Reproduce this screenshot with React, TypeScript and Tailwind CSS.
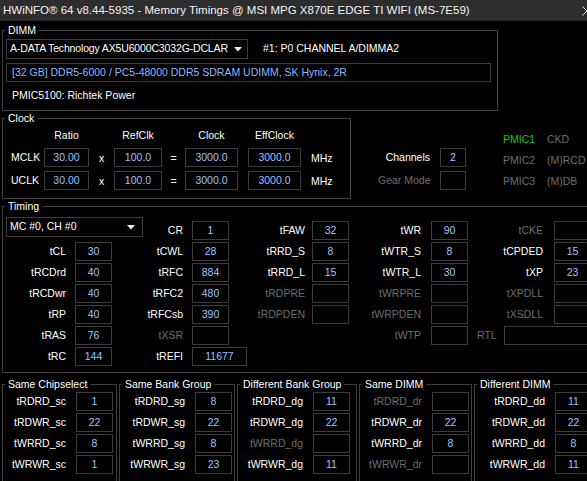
import React from "react";

type Cell = { l: string; v?: string; off?: boolean; wide?: boolean; rtl?: boolean };

function Box({ v, className = "w-[37px]" }: { v?: string; className?: string }) {
  return (
    <div
      className={`flex h-[19px] shrink-0 items-center justify-center border border-[#3c3c3c] text-[#9cc4ff] ${className}`}
    >
      {v}
    </div>
  );
}

function Arrow() {
  return (
    <svg width="8" height="5" viewBox="0 0 8 5" className="shrink-0">
      <path d="M0 0h8L4 4.5z" fill="#f0f0f0" />
    </svg>
  );
}

function Group({
  title,
  className = "",
  children,
}: {
  title: string;
  className?: string;
  children: React.ReactNode;
}) {
  return (
    <fieldset className={`min-w-0 shrink-0 border border-[#3f3f3f] ${className}`}>
      <legend className="ml-[2px] px-[3px] leading-[14px]">{title}</legend>
      {children}
    </fieldset>
  );
}

function Label({ l, off, className = "" }: { l: string; off?: boolean; className?: string }) {
  return <span className={`shrink-0 ${off ? "text-[#6d6d6d]" : ""} ${className}`}>{l}</span>;
}

function TCol({
  w,
  lw,
  gap,
  rows,
  className = "",
  children,
}: {
  w: string;
  lw: string;
  gap: string;
  rows: Cell[];
  className?: string;
  children?: React.ReactNode;
}) {
  return (
    <div className={`flex shrink-0 flex-col ${w} ${className}`}>
      {children}
      <div className="flex flex-col gap-[2px]">
        {rows.map((r) =>
          r.rtl ? (
            <div key={r.l} className="flex h-[19px] items-center pl-[9px]">
              <Label l={r.l} off={r.off} />
              <Box v={r.v} className="ml-[7px] w-[100px]" />
            </div>
          ) : (
            <div key={r.l} className="flex h-[19px] items-center">
              <Label l={r.l} off={r.off} className={`${lw} text-right`} />
              <Box v={r.v} className={`${gap} ${r.wide ? "w-[55px]" : "w-[37px]"}`} />
            </div>
          )
        )}
      </div>
    </div>
  );
}

function BGroup({
  title,
  rows,
  className,
}: {
  title: string;
  rows: Cell[];
  className: string;
}) {
  return (
    <Group title={title} className={className}>
      <div className="flex flex-col gap-[2px] pb-[10px] pt-[1px]">
        {rows.map((r) => (
          <div key={r.l} className="flex h-[19px] items-center justify-end">
            <Label l={r.l} off={r.off} />
            <Box v={r.v} className="ml-[10px] w-[37px]" />
          </div>
        ))}
      </div>
    </Group>
  );
}

const col1: Cell[] = [
  { l: "tCL", v: "30" },
  { l: "tRCDrd", v: "40" },
  { l: "tRCDwr", v: "40" },
  { l: "tRP", v: "40" },
  { l: "tRAS", v: "76" },
  { l: "tRC", v: "144" },
];
const col2: Cell[] = [
  { l: "CR", v: "1" },
  { l: "tCWL", v: "28" },
  { l: "tRFC", v: "884" },
  { l: "tRFC2", v: "480" },
  { l: "tRFCsb", v: "390" },
  { l: "tXSR", off: true },
  { l: "tREFI", v: "11677", wide: true },
];
const col3: Cell[] = [
  { l: "tFAW", v: "32" },
  { l: "tRRD_S", v: "8" },
  { l: "tRRD_L", v: "15" },
  { l: "tRDPRE", off: true },
  { l: "tRDPDEN", off: true },
];
const col4: Cell[] = [
  { l: "tWR", v: "90" },
  { l: "tWTR_S", v: "8" },
  { l: "tWTR_L", v: "30" },
  { l: "tWRPRE", off: true },
  { l: "tWRPDEN", off: true },
  { l: "tWTP", off: true },
];
const col5: Cell[] = [
  { l: "tCKE", off: true },
  { l: "tCPDED", v: "15" },
  { l: "tXP", v: "23" },
  { l: "tXPDLL", off: true },
  { l: "tXSDLL", off: true },
  { l: "RTL", off: true, rtl: true },
];

const groups: { title: string; className: string; rows: Cell[] }[] = [
  {
    title: "Same Chipselect",
    className: "w-[115px] pr-[3px]",
    rows: [
      { l: "tRDRD_sc", v: "1" },
      { l: "tRDWR_sc", v: "22" },
      { l: "tWRRD_sc", v: "8" },
      { l: "tWRWR_sc", v: "1" },
    ],
  },
  {
    title: "Same Bank Group",
    className: "ml-[2px] w-[116px] pr-[2px]",
    rows: [
      { l: "tRDRD_sg", v: "8" },
      { l: "tRDWR_sg", v: "22" },
      { l: "tWRRD_sg", v: "8" },
      { l: "tWRWR_sg", v: "23" },
    ],
  },
  {
    title: "Different Bank Group",
    className: "ml-[2px] w-[120px] pr-[6px]",
    rows: [
      { l: "tRDRD_dg", v: "11" },
      { l: "tRDWR_dg", v: "22" },
      { l: "tWRRD_dg", off: true },
      { l: "tWRWR_dg", v: "11" },
    ],
  },
  {
    title: "Same DIMM",
    className: "ml-[2px] w-[113px] pr-[2px]",
    rows: [
      { l: "tRDRD_dr", off: true },
      { l: "tRDWR_dr", v: "22" },
      { l: "tWRRD_dr", v: "8" },
      { l: "tWRWR_dr", off: true },
    ],
  },
  {
    title: "Different DIMM",
    className: "ml-[2px] w-[130px] pr-[11px]",
    rows: [
      { l: "tRDRD_dd", v: "11" },
      { l: "tRDWR_dd", v: "22" },
      { l: "tWRRD_dd", v: "8" },
      { l: "tWRWR_dd", v: "11" },
    ],
  },
];

export default function App() {
  return (
    <div className="h-[481px] w-[587px] overflow-hidden whitespace-nowrap bg-black font-['Liberation_Sans',Arial,sans-serif] text-[10.5px] text-white">
      <div className="w-[620px]">
        {/* title bar */}
        <div className="flex h-[21px] items-center justify-between bg-[#2d2d2d] pl-[3px] pr-[28px] text-[11.5px] text-[#f2f2f2]">
          <span>HWiNFO® 64 v8.44-5935 - Memory Timings @ MSI MPG X870E EDGE TI WIFI (MS-7E59)</span>
          <svg width="10" height="10" viewBox="0 0 10 10">
            <path d="M0.5 0.5l9 9M9.5 0.5l-9 9" stroke="#e8e8e8" strokeWidth="1" />
          </svg>
        </div>

        <div className="pl-[2px]">
          {/* DIMM */}
          <Group title="DIMM" className="mt-[2px] w-[496px] pb-[8px]">
            <div className="mt-[2px] flex items-center">
              <div className="ml-[3px] flex h-[20px] w-[242px] items-center justify-between border border-[#3c3c3c] pl-[3px] pr-[5px]">
                <span className="tracking-[-0.15px]">A-DATA Technology AX5U6000C3032G-DCLAR</span>
                <Arrow />
              </div>
              <span className="ml-[15px]">#1: P0 CHANNEL A/DIMMA2</span>
            </div>
            <div className="ml-[3px] mt-[4px] flex h-[19px] w-[485px] items-center border border-[#3c3c3c] pl-[5px] text-[#8db8ff]">
              [32 GB] DDR5-6000 / PC5-48000 DDR5 SDRAM UDIMM, SK Hynix, 2R
            </div>
            <div className="mt-[6px] h-[14px] pl-[9px] leading-[14px]">PMIC5100: Richtek Power</div>
          </Group>

          {/* Clock row */}
          <div className="flex items-start">
            <Group title="Clock" className="w-[349px] pb-[8px]">
              <div className="grid grid-cols-[41px_45px_25px_48px_23px_53px_10px_53px_auto] grid-rows-[16px_19px_19px] gap-y-[4px] pt-[3px]">
                <span />
                <span className="text-center leading-[14px]">Ratio</span>
                <span />
                <span className="text-center leading-[14px]">RefClk</span>
                <span />
                <span className="text-center leading-[14px]">Clock</span>
                <span />
                <span className="text-center leading-[14px]">EffClock</span>
                <span />

                {[
                  ["MCLK", "30.00", "100.0", "3000.0", "3000.0"],
                  ["UCLK", "30.00", "100.0", "3000.0", "3000.0"],
                ].map((r) => (
                  <React.Fragment key={r[0]}>
                    <span className="flex items-center pl-[8px]">{r[0]}</span>
                    <Box v={r[1]} className="w-[45px]" />
                    <span className="flex items-center justify-center pt-[3px]">x</span>
                    <Box v={r[2]} className="w-[48px]" />
                    <span className="flex items-center justify-center pt-[2px]">=</span>
                    <Box v={r[3]} className="w-[53px]" />
                    <span />
                    <Box v={r[4]} className="w-[53px]" />
                    <span className="flex items-center pl-[10px] pt-[2px]">MHz</span>
                  </React.Fragment>
                ))}
              </div>
            </Group>

            <div className="ml-[27px] flex flex-col gap-[4px] pt-[37px]">
              <div className="flex h-[19px] items-center">
                <span className="w-[52px] text-right">Channels</span>
                <Box v="2" className="ml-[10px] w-[26px]" />
              </div>
              <div className="flex h-[19px] items-center">
                <span className="w-[52px] text-right text-[#6d6d6d]">Gear Mode</span>
                <Box className="ml-[10px] w-[26px]" />
              </div>
            </div>

            <div className="ml-[37px] flex flex-col gap-[7px] pt-[21px] leading-[14px] text-[#6d6d6d]">
              <div className="flex">
                <span className="w-[44px] text-[#16c916]">PMIC1</span>
                <span>CKD</span>
              </div>
              <div className="flex">
                <span className="w-[44px]">PMIC2</span>
                <span>(M)RCD</span>
              </div>
              <div className="flex">
                <span className="w-[44px]">PMIC3</span>
                <span>(M)DB</span>
              </div>
            </div>
          </div>

          {/* Timing */}
          <Group title="Timing" className="w-[612px] pb-[6px]">
            <div className="flex">
              <TCol w="w-[109px]" lw="w-[63px]" gap="ml-[9px]" rows={col1} className="pt-[4px]">
                <div className="mb-[5px] ml-[3px] flex h-[20px] w-[137px] items-center justify-between border border-[#3c3c3c] pl-[3px] pr-[7px]">
                  <span>MC #0, CH #0</span>
                  <Arrow />
                </div>
              </TCol>
              <TCol w="w-[117px]" lw="w-[71px]" gap="ml-[9px]" rows={col2} className="pt-[8px]" />
              <TCol w="w-[120px]" lw="w-[76px]" gap="ml-[7px]" rows={col3} className="pt-[8px]" />
              <TCol w="w-[119px]" lw="w-[72px]" gap="ml-[10px]" rows={col4} className="pt-[8px]" />
              <TCol w="w-[123px]" lw="w-[75px]" gap="ml-[11px]" rows={col5} className="pt-[8px]" />
            </div>
          </Group>

          {/* bottom groups */}
          <div className="mt-[4px] flex items-start">
            {groups.map((g) => (
              <BGroup key={g.title} title={g.title} className={g.className} rows={g.rows} />
            ))}
          </div>
        </div>
      </div>
    </div>
  );
}
